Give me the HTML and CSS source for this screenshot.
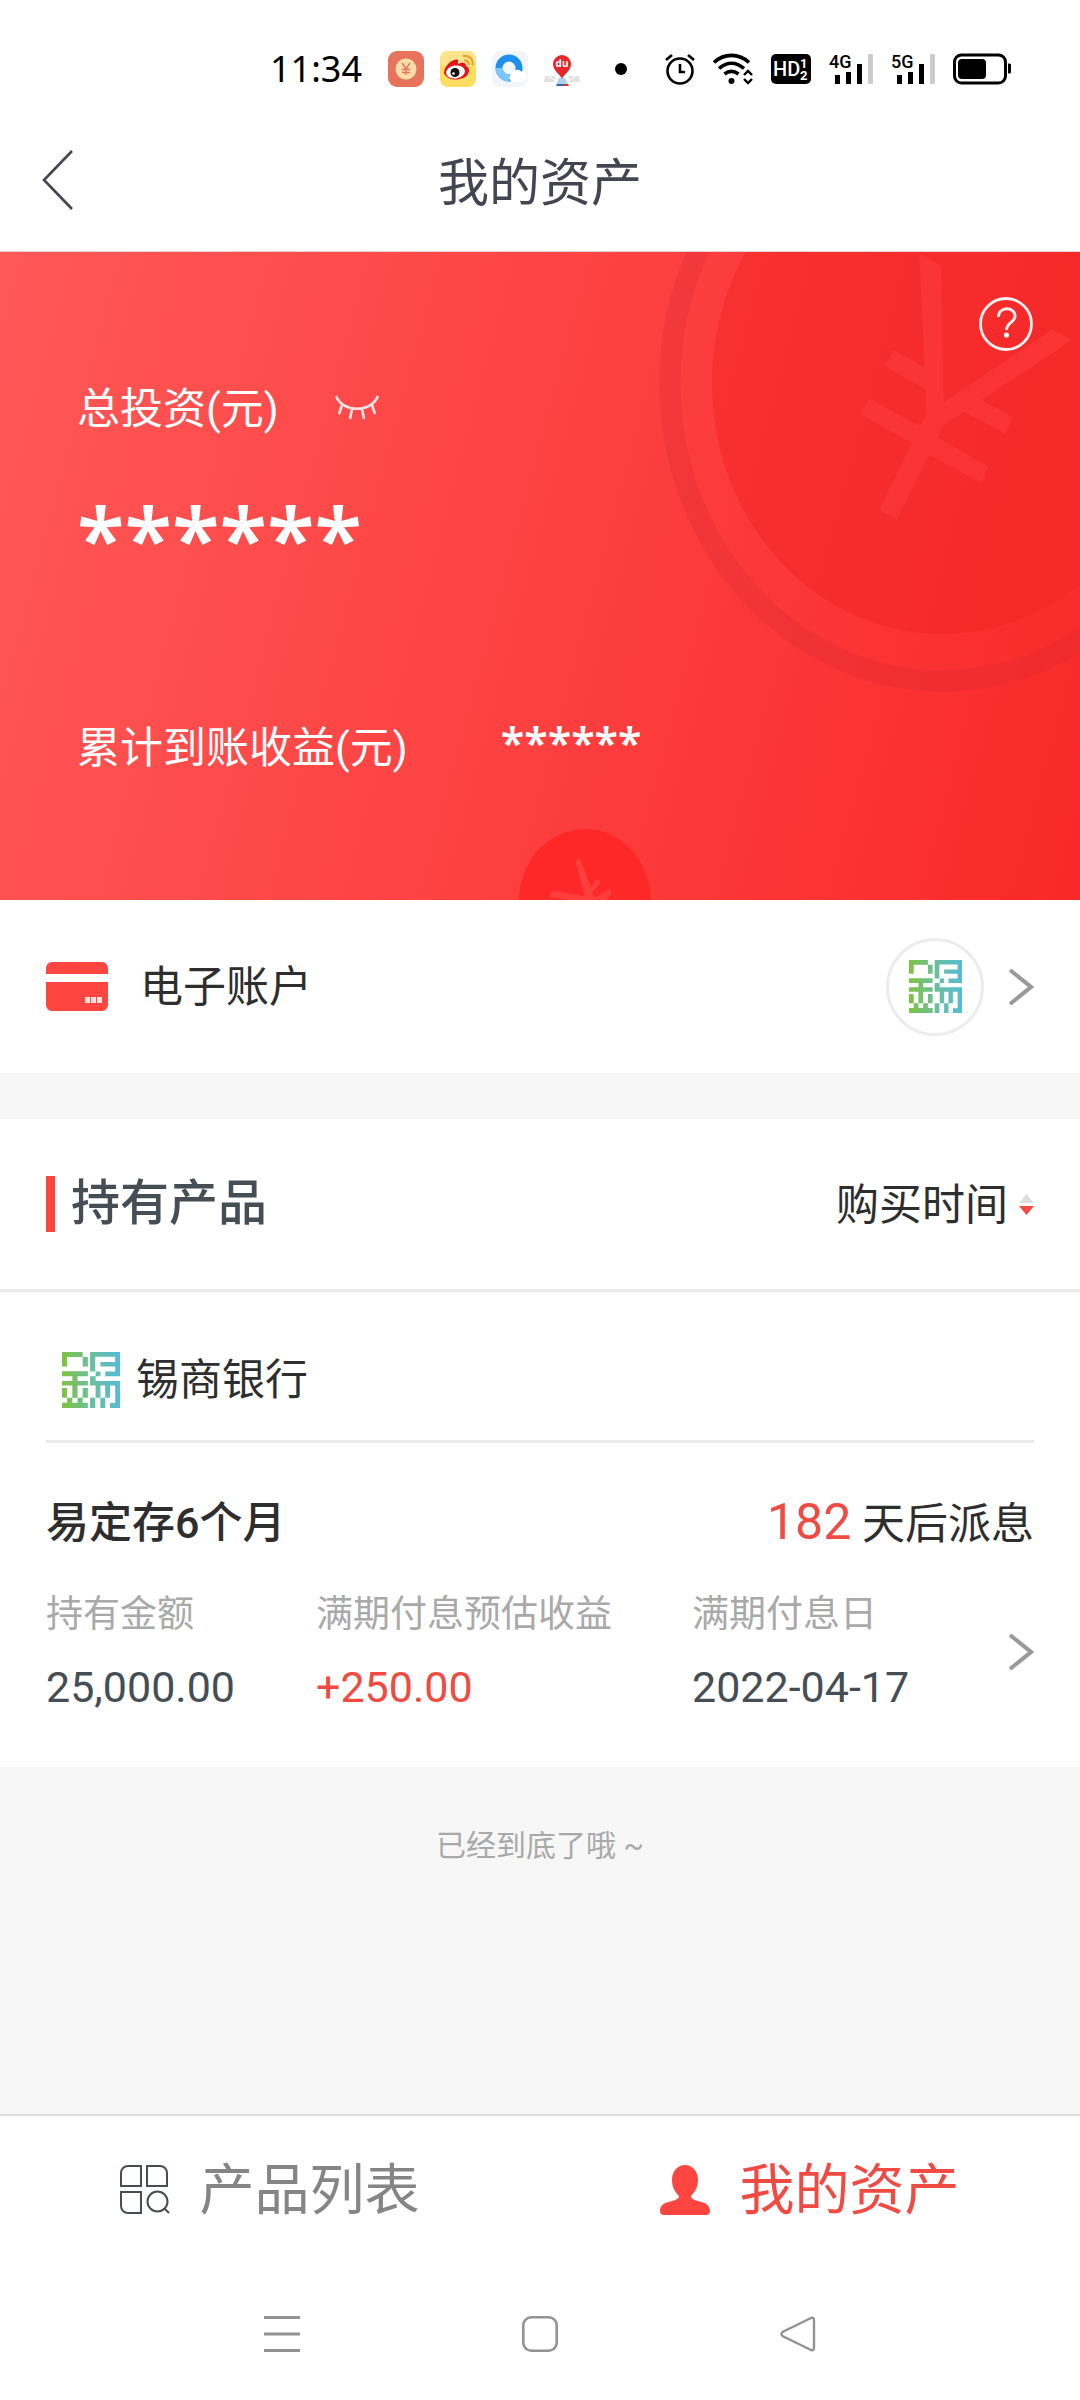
FILE: index.html
```html
<!DOCTYPE html>
<html lang="zh-CN">
<head>
<meta charset="utf-8">
<meta name="viewport" content="width=device-width, initial-scale=1">
<title>我的资产</title>
<link rel="stylesheet" href="styles.css">
</head>
<body>
<svg class="defs" width="0" height="0" aria-hidden="true">
  <defs>
    <linearGradient id="bankFill" gradientUnits="userSpaceOnUse" x1="0" y1="0" x2="157" y2="0">
      <stop offset="0" stop-color="#7fc241"/>
      <stop offset=".5" stop-color="#6bbf9c"/>
      <stop offset="1" stop-color="#55bbd8"/>
    </linearGradient>
    <symbol id="bankLogo" viewBox="0 0 157 157" preserveAspectRatio="none">
      <path fill="url(#bankFill)" d="M0 0H56V14H14V41H0ZM56 14H70V41H56ZM76 0H157V68H117V55H144V41H104V28H144V13H90V55H76ZM91 55H104V68H91ZM0 54H70V68H42V81H70V94H42V128H28V94H0V81H28V68H0ZM0 101H14V128H0ZM56 101H70V128H56ZM14 128H28V142H42V128H56V142H70V157H0V142H14ZM76 68H91V81H157V157H130V143H144V94H130V128H117V94H104V128H91V94H76ZM76 128H90V157H76ZM104 128H117V157H104Z"/>
    </symbol>
  </defs>
</svg>

<div class="status">
  <time class="status-time">11:34</time>
  <div class="status-apps">
    <svg width="36" height="36" viewBox="0 0 36 36" aria-hidden="true"><rect width="36" height="36" rx="9" fill="#e8735d"/><circle cx="18" cy="18" r="10.500" fill="#ffdca8"/><path d="M14 12L18 18L22 12M18 18V24M14 18.500H22M14 21.500H22" fill="none" stroke="#e8735d" stroke-width="1.400"/></svg>
    <svg width="36" height="36" viewBox="0 0 36 36" aria-hidden="true"><rect width="36" height="36" rx="8" fill="#ffdc62"/><rect width="36" height="16" rx="8" fill="#ffe48c"/><path d="M4 22C4 15 12 8 17 8.500C19 9 18 12 18 13C22 11 26 11 26 15C29 16 30 19 28 23C25 29 8 32 4 22Z" fill="#e0161b"/><ellipse cx="15.500" cy="21" rx="9.500" ry="6.500" fill="#fff" transform="rotate(-8 15.500 21)"/><circle cx="15" cy="21.500" r="4.500" fill="#111"/><circle cx="13.500" cy="22.500" r="1.300" fill="#fff"/><path d="M24 9.500C27 9 29 11 28.500 14M23 5C29 4 33.500 8 32.500 14.500" fill="none" stroke="#eaa32b" stroke-width="2.300"/></svg>
    <svg width="36" height="36" viewBox="0 0 36 36" aria-hidden="true"><rect width="36" height="36" rx="8" fill="#f2f5fa"/><circle cx="17" cy="17" r="10" fill="none" stroke="#1c8ff0" stroke-width="7"/><path d="M7 17A10 10 0 0 0 17 27" fill="none" stroke="#7cc6fb" stroke-width="7"/><path d="M20 31a5 5 0 0 1 0-9a6 6 0 0 1 10-1a5 5 0 0 1 0 10Z" fill="#fff"/></svg>
    <svg width="36" height="36" viewBox="0 0 36 36" aria-hidden="true"><path d="M1 25H12L10 31H0ZM24 25H35L36 31H26Z" fill="#e2e2e2"/><path d="M4 25L14 31M32 25L22 31" stroke="#fff" stroke-width="1"/><path d="M15 27H21L25 35H12Z" fill="#a9d3ee"/><path d="M13 33H19V35H12Z" fill="#3467b4"/><path d="M19 33H24L25 35H19Z" fill="#d3352f"/><path d="M18 28C17 24 9 20 9 13A9 9 0 0 1 27 13C27 20 19 24 18 28Z" fill="#e6262b"/><text class="pin-text" x="18" y="16" text-anchor="middle">du</text></svg>
  </div>
  <svg class="status-dot" width="12" height="12" viewBox="0 0 12 12" aria-hidden="true"><circle cx="6" cy="6" r="6"/></svg>
  <div class="status-system">
    <svg width="30" height="32" viewBox="0 0 30 32" aria-hidden="true"><circle cx="15" cy="18" r="12.500" fill="none" stroke="#000" stroke-width="2.600"/><path d="M15 11V19H20M1 7L7 2M29 7L23 2" fill="none" stroke="#000" stroke-width="2.600"/></svg>
    <svg width="40" height="32" viewBox="0 0 40 32" aria-hidden="true"><g fill="none" stroke="#000" stroke-width="3.600"><path d="M1 9.500C11 0 26 0 36 9.500M6 15.500C14 8.500 23 8.500 31 15.500M11.500 21C16 17.500 21 17.500 25.500 21"/></g><circle cx="18.500" cy="28" r="3"/><path d="M31 22L35 18L39 22M31 26L35 30L39 26" fill="none" stroke="#000" stroke-width="2.400"/></svg>
    <svg width="40" height="32" viewBox="0 0 40 32" aria-hidden="true"><rect y="1" width="40" height="30" rx="5"/><text class="hd-text" x="2" y="23">HD</text><text class="hd-num" x="29" y="15">1</text><text class="hd-num" x="29" y="27">2</text></svg>
    <svg width="44" height="36" viewBox="0 -4 44 36" aria-hidden="true"><text class="net-text" x="0" y="15">4G</text><path d="M6 22h5v9h-5zM17 19h5v12h-5zM28 11h5v20h-5z"/><rect x="39" y="1" width="5" height="30" rx="1" fill="#ccc"/></svg>
    <svg width="44" height="36" viewBox="0 -4 44 36" aria-hidden="true"><text class="net-text" x="0" y="15">5G</text><path d="M6 22h5v9h-5zM17 19h5v12h-5zM28 11h5v20h-5z"/><rect x="39" y="1" width="5" height="30" rx="1" fill="#ccc"/></svg>
    <svg width="58" height="32" viewBox="0 0 58 32" aria-hidden="true"><rect x="1.500" y="2" width="51" height="28" rx="7" fill="none" stroke="#000" stroke-width="3"/><rect x="5" y="6" width="28" height="20" rx="4"/><path d="M55 10.500h1.500a1.500 1.500 0 0 1 1.500 1.500v7a1.500 1.500 0 0 1-1.500 1.500H55z"/></svg>
  </div>
</div>

<header class="topbar">
  <button class="back" type="button" aria-label="返回"><svg width="32" height="60" viewBox="0 0 32 60" aria-hidden="true"><path d="M30 1L2 30L30 59" fill="none" stroke="#454552" stroke-width="2.600"/></svg></button>
  <h1 class="topbar-title">我的资产</h1>
</header>

<main class="content">
  <section class="hero">
    <svg class="hero-art" viewBox="0 0 1080 648" preserveAspectRatio="none" aria-hidden="true">
      <ellipse cx="942" cy="131" rx="272" ry="298" fill="none" stroke="#d92b33" stroke-opacity=".3" stroke-width="21"/>
      <ellipse cx="942" cy="131" rx="230" ry="251" fill="#f22424" fill-opacity=".5"/>
      <path transform="translate(640 -12) scale(.3333)" fill="#ff4040" fill-opacity=".45" d="M838 42L903 76L911 487L1238 267L1295 301L1025 480L1118 532L1095 581L972 515L908 558L893 592L1046 680L1023 728L867 644L770 840L718 810L816 610L662 522L687 475L840 559L859 525L857 448L735 378L761 330L854 382Z"/>
      <ellipse cx="585" cy="649" rx="66" ry="72" fill="#ff2828"/>
      <path transform="translate(460 548) scale(.3954 .3333)" fill="#ff3e3e" d="M302 171L331 262L346 235L355 246L334 280L340 293L378 267L384 279L371 300H225L225 288L235 272L316 288L292 184Z"/>
      <path transform="translate(460 548) scale(.3954 .3333)" fill="#ff2828" d="M225 291L282 301H225ZM345 301L350 295L352 301Z"/>
    </svg>
    <button class="help" type="button" aria-label="帮助"><svg width="54" height="54" viewBox="0 0 54 54" aria-hidden="true"><circle cx="27" cy="27" r="25.500" fill="none" stroke="#fff" stroke-opacity=".92" stroke-width="2.800"/><path d="M19.500 20C19.500 9 36 9.500 36 19C36 25.500 27.500 25.500 27.500 33" fill="none" stroke="#fff" stroke-opacity=".92" stroke-width="3"/><circle cx="27.500" cy="38" r="2.600" fill="#fff"/></svg></button>
    <div class="hero-row">
      <span>总投资(元)</span>
      <button class="eye" type="button" aria-label="显示金额"><svg width="44" height="30" viewBox="0 0 44 30" aria-hidden="true"><path d="M1 2C8 19 36 19 43 2M7 11L4 20M17 15L15 25M27 15L29 25M37 11L40 20" fill="none" stroke="#fff" stroke-opacity=".85" stroke-width="2.600"/></svg></button>
    </div>
    <div class="hero-total">******</div>
    <div class="hero-row hero-income">
      <span>累计到账收益(元)</span>
      <span class="hero-mask">******</span>
    </div>
  </section>

  <a class="account" href="#account">
    <svg width="62" height="50" viewBox="0 0 62 50" aria-hidden="true"><path d="M0 12V6a6 6 0 0 1 6-6H56a6 6 0 0 1 6 6V12ZM0 20H62V43a6 6 0 0 1-6 6H6a6 6 0 0 1-6-6Z" fill="#ff453f"/><path d="M39 35h5v6h-5zM45 35h5v6h-5zM51 35h5v6h-5z" fill="#ffe3e1"/></svg>
    <span class="account-name">电子账户</span>
    <span class="badge"><svg width="53" height="53" aria-hidden="true"><use href="#bankLogo"/></svg></span>
    <svg width="25" height="36" viewBox="0 0 25 36" aria-hidden="true"><path d="M1 1L22 18L1 35" fill="none" stroke="#999" stroke-width="4"/></svg>
  </a>

  <section class="holdings">
    <div class="holdings-head">
      <h2 class="holdings-title">持有产品</h2>
      <button class="sort" type="button">购买时间<svg width="15" height="22" viewBox="0 0 15 22" aria-hidden="true"><path d="M0 9L7.500 0L15 9Z" fill="#ddd"/><path d="M0 12H15L7.500 21Z" fill="#f04a42"/></svg></button>
    </div>
    <a class="product" href="#product">
      <div class="bank"><svg width="58" height="56" aria-hidden="true"><use href="#bankLogo"/></svg><span>锡商银行</span></div>
      <div class="product-head">
        <h3 class="product-name">易定存6个月</h3>
        <p class="payout"><span class="payout-days">182</span> 天后派息</p>
      </div>
      <dl class="facts">
        <div><dt>持有金额</dt><dd>25,000.00</dd></div>
        <div><dt>满期付息预估收益</dt><dd class="gain">+250.00</dd></div>
        <div><dt>满期付息日</dt><dd>2022-04-17</dd></div>
      </dl>
      <svg class="product-arrow" width="25" height="36" viewBox="0 0 25 36" aria-hidden="true"><path d="M1 1L22 18L1 35" fill="none" stroke="#999" stroke-width="4"/></svg>
    </a>
  </section>
  <p class="end">已经到底了哦 ~</p>
</main>

<nav class="tabs">
  <a class="tab" href="#list"><svg width="50" height="50" viewBox="0 0 50 50" aria-hidden="true"><g fill="none" stroke="#454e55" stroke-width="2"><path d="M21 1V21H1V8a7 7 0 0 1 7-7ZM27 1H40a7 7 0 0 1 7 7V21H27ZM1 27H21V48H8a7 7 0 0 1-7-7Z"/><circle cx="37.500" cy="36.500" r="10"/><path d="M44.500 43.500L49 48"/></g></svg>产品列表</a>
  <a class="tab tab-on" href="#assets" aria-current="page"><svg width="50" height="50" viewBox="0 0 50 50" aria-hidden="true"><path d="M25 0C33 0 38 7 38 15C38 22 35 27 31 31C31 38 50 34 50 46Q50 50 46 50H4Q0 50 0 46C0 34 19 38 19 31C15 27 12 22 12 15C12 7 17 0 25 0Z" fill="#ff453f"/></svg>我的资产</a>
</nav>

<div class="sysnav">
  <button type="button" aria-label="最近任务"><svg width="36" height="36" viewBox="0 0 36 36" aria-hidden="true"><path d="M0 1.500H36M0 18H36M0 34.500H36" stroke="#929292" stroke-width="3"/></svg></button>
  <button type="button" aria-label="主屏幕"><svg width="36" height="36" viewBox="0 0 36 36" aria-hidden="true"><rect x="1.300" y="1.300" width="33.400" height="33.400" rx="8" fill="none" stroke="#929292" stroke-width="2.600"/></svg></button>
  <button type="button" aria-label="系统返回"><svg width="36" height="36" viewBox="0 0 36 36" aria-hidden="true"><path d="M31 2L2.500 16Q0.500 18 2.500 20L31 34Q34 35 34 32V4Q34 1 31 2Z" fill="none" stroke="#929292" stroke-width="2.400"/></svg></button>
</div>
</body>
</html>
```

FILE: styles.css
```css
* { box-sizing: border-box; margin: 0; padding: 0; }

body {
  display: flex;
  flex-direction: column;
  min-height: 100vh;
  background: #fff;
  color: #2e2e2e;
  font-family: Roboto, "Noto Sans CJK SC", sans-serif;
  font-size: 43px;
  line-height: 60px;
}

button {
  display: flex;
  align-items: center;
  border: 0;
  background: none;
  color: inherit;
  font: inherit;
}

a { color: inherit; text-decoration: none; }
svg { display: block; flex: none; }
.defs { position: absolute; }

/* status bar */
.status {
  display: flex;
  align-items: center;
  justify-content: flex-end;
  height: 112px;
  padding: 26px 69px 0 0;
  color: #000;
}
.status-time { margin-right: 26px; font-family: "Noto Sans", sans-serif; font-size: 36px; }
.status-apps { display: flex; gap: 16px; }
.status-dot { margin: 0 38px 0 35px; }
.status-system { display: flex; align-items: center; gap: 18px; }
.status-system svg:nth-child(4), .status-system svg:nth-child(5) { margin-top: -4px; }
.pin-text { fill: #fff; font: 700 10px "Open Sans", sans-serif; }
.hd-text { fill: #fff; font: 500 20px Roboto, sans-serif; }
.hd-num { fill: #fff; font: 700 13px Roboto, sans-serif; }
.net-text { font: 500 18px Roboto, sans-serif; }

/* title bar */
.topbar {
  display: grid;
  grid-template-columns: 1fr auto 1fr;
  align-items: center;
  height: 140px;
  padding: 0 42px;
  border-bottom: 1px solid #e5d5d8;
}
.topbar-title { padding-top: 4px; color: #454552; font-size: 51px; font-weight: 400; }
.back { margin-bottom: 4px; }

.content { flex: 1; background: #f7f7f7; }

/* asset summary */
.hero {
  position: relative;
  min-height: 648px;
  padding: 127px 77px 0;
  background: linear-gradient(105deg, #ff5858 0%, #fd4141 50%, #f92828 100%);
  color: #fff;
}
.hero-art { position: absolute; inset: 0; width: 100%; height: 100%; }
.help { position: absolute; top: 45px; right: 47px; }
.hero-row { position: relative; display: flex; align-items: center; }
.eye { margin-left: 56px; }
.hero-total {
  position: relative;
  padding-top: 38px;
  font-family: "Noto Sans", sans-serif;
  font-size: 87px;
  font-weight: 600;
  line-height: 120px;
}
.hero-income { margin-top: 116px; }
.hero-mask { margin: 0 0 10px 93px; font-family: "Noto Sans", sans-serif; font-size: 43px; font-weight: 600; }

/* bank account row */
.account {
  display: flex;
  align-items: center;
  height: 173px;
  padding: 0 46px;
  background: #fff;
}
.account-name { margin-left: 32px; }
.badge {
  display: grid;
  place-items: center;
  width: 98px;
  height: 98px;
  margin: 0 25px 0 auto;
  border: 3px solid #ececec;
  border-radius: 50%;
}

/* holdings */
.holdings { margin-top: 46px; background: #fff; }
.holdings-head {
  display: flex;
  align-items: center;
  justify-content: space-between;
  height: 173px;
  padding: 0 46px;
  border-bottom: 3px solid #eaeaea;
}
.holdings-title {
  padding-left: 16px;
  border-left: 9px solid #ff453f;
  color: #454e55;
  font-size: 49px;
  font-weight: 500;
  line-height: 56px;
}
.sort { gap: 11px; padding-top: 2px; }
.product { position: relative; display: block; padding: 0 46px 50px; }
.bank {
  display: flex;
  align-items: center;
  gap: 16px;
  height: 151px;
  padding: 28px 16px 0;
  border-bottom: 3px solid #eaeaea;
}
.product-head { display: flex; align-items: center; justify-content: space-between; padding-top: 49px; }
.product-name { font-size: 43px; font-weight: 500; }
.payout-days { color: #f04a42; font-size: 50px; }
.facts {
  display: grid;
  grid-template-columns: 270fr 376fr 342fr;
  padding-top: 34px;
}
.facts dt { color: #a9a9a9; font-size: 37px; line-height: 54px; }
.facts dd { padding-top: 15px; color: #454e55; }
.facts .gain { color: #f04a42; }
.product-arrow { position: absolute; right: 46px; bottom: 97px; }

.end { padding: 54px 0; color: #a9a9a9; font-size: 30px; line-height: 50px; text-align: center; }

/* bottom tabs */
.tabs {
  display: grid;
  grid-template-columns: 1fr 1fr;
  border-top: 2px solid #dedede;
}
.tab {
  display: flex;
  align-items: center;
  justify-content: center;
  gap: 29px;
  height: 146px;
  padding-top: 2px;
  color: #858585;
  font-size: 55px;
}
.tab-on { color: #f04a42; }

.sysnav {
  display: flex;
  justify-content: center;
  gap: 222px;
  padding: 54px 0 48px;
}
```
